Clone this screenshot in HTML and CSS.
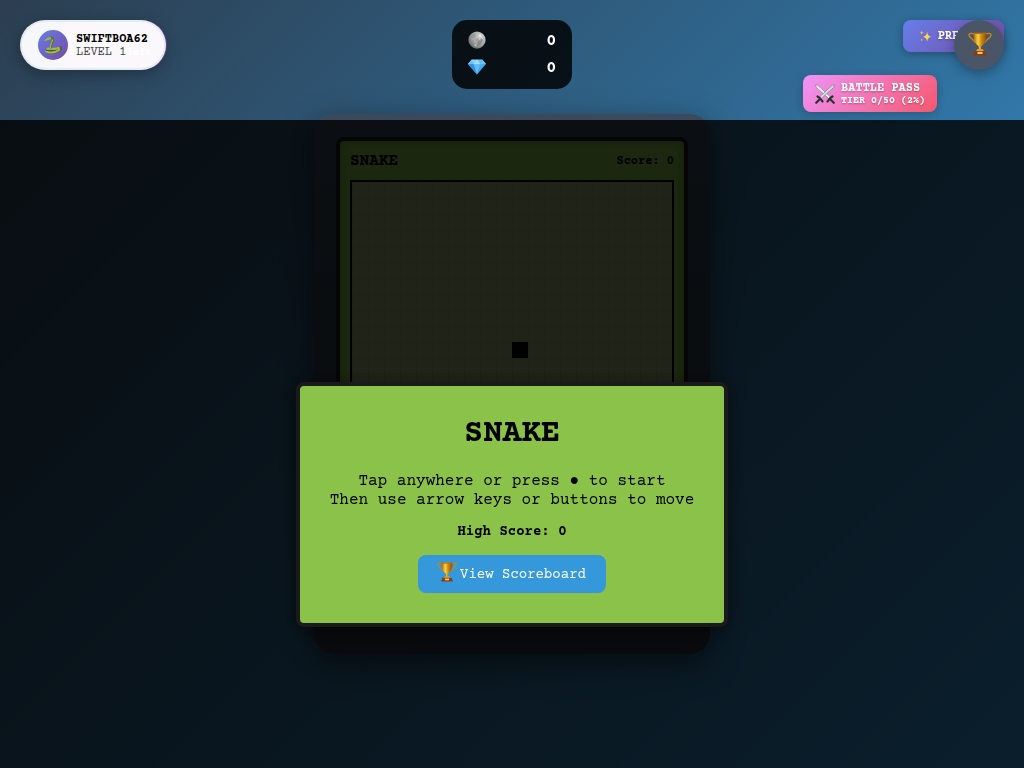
FILE: index.html
```html
<!DOCTYPE html>
<html lang="en">
<head>
<meta charset="utf-8">
<title>Snake</title>
<link rel="stylesheet" href="styles.css">
</head>
<body>
<svg class="sprite" aria-hidden="true">
  <defs>
    <linearGradient id="gold" x1="0" x2="1"><stop offset="0" stop-color="#a8640c"/><stop offset=".35" stop-color="#ffd23c"/><stop offset=".6" stop-color="#d08a10"/><stop offset="1" stop-color="#8a4d08"/></linearGradient>
    <linearGradient id="gem" x1="0" y1="0" x2="1" y2="1"><stop offset="0" stop-color="#bfeaff"/><stop offset=".5" stop-color="#4db4f5"/><stop offset="1" stop-color="#1b7fd0"/></linearGradient>
    <radialGradient id="moon" cx=".7" cy=".3" r=".8"><stop offset="0" stop-color="#d8d8d8"/><stop offset=".6" stop-color="#a2a2a2"/><stop offset="1" stop-color="#666"/></radialGradient>
    <symbol id="trophy" viewBox="0 0 24 24">
      <path d="M6.500 2.500C5 1 1 .8 1 3c0 3 4.500 4 6 7.500M17.500 2.500C19 1 23 .8 23 3c0 3-4.500 4-6 7.500" fill="none" stroke="#c9861a" stroke-width="1.400"/>
      <path d="M5.500 1h13c.3 6-1.500 11-4.500 12.500-.8.800-1 2-.8 4.500h-2.400c.2-2.500 0-3.700-.8-4.500C7 12 5.200 7 5.500 1z" fill="url(#gold)"/>
      <path d="M5.500 .700h13v1.300h-13z" fill="#b66f0c"/>
      <path d="M9.500 17h5l1.800 2.500H7.700z" fill="#e0a02a"/>
      <path d="M6.500 19h11l1.500 4.500H5z" fill="#873f12"/>
      <path d="M9.500 19.800h5v2.200h-5z" fill="#f1c06a"/>
    </symbol>
    <symbol id="swords" viewBox="0 0 24 24">
      <path d="M.5 1l3 .6L19 16l-2 2L1.500 4z" fill="#eef2f4" stroke="#76828a" stroke-width=".8"/>
      <path d="M23.500 1l-3 .6L5 16l2 2L22.500 4z" fill="#d4dce0" stroke="#76828a" stroke-width=".8"/>
      <path d="M3 15l2.500 1.500L7.500 19l1.500 2M21 15l-2.500 1.500L16.500 19 15 21M6 18l-4.500 4.500M18 18l4.500 4.500" stroke="#2c3034" stroke-width="2.600" stroke-linecap="round" fill="none"/>
    </symbol>
    <symbol id="sparkles" viewBox="0 0 24 24">
      <path d="M15 3c1 6 2.500 8 8 9.500-5.500 1.500-7 3.500-8 9.500-1-6-2.500-8-8-9.500C12.500 11 14 9 15 3z" fill="#ffd34e"/>
      <path d="M5 1c.5 2.500 1.300 3.500 4 4-2.700.5-3.500 1.500-4 4-.5-2.500-1.300-3.500-4-4 2.700-.5 3.500-1.500 4-4zM5 15c.4 2 1 2.800 3 3.200-2 .4-2.600 1.200-3 3.200-.4-2-1-2.800-3-3.200 2-.4 2.600-1.200 3-3.200z" fill="#f5b93a"/>
    </symbol>
    <symbol id="diamond" viewBox="0 0 24 24">
      <path d="M5 2h14l5 6-12 14L0 8z" fill="url(#gem)"/>
      <path d="M5 2L7.500 8H0zM19 2L16.500 8H24z" fill="#66c4f8"/>
      <path d="M7.500 8L12 2 16.500 8z" fill="#a5dcff"/>
      <path d="M7.500 8h9L12 22z" fill="#63bbf8"/>
      <path d="M0 8h7.500L12 22z" fill="#2c93e0"/>
    </symbol>
    <symbol id="coin" viewBox="0 0 24 24">
      <circle cx="12" cy="12" r="11.500" fill="url(#moon)"/>
      <path d="M5 5l4-2 2 3-3 4-4-1zM11 9l4 1-1 4-4-1zM3 12l4 1v4l-3-1z" fill="#8a8a8a" opacity=".45"/>
      <path d="M13 14l5-4 2 2-3 6-5 2z" fill="#686868" opacity=".5"/>
      <circle cx="10" cy="19" r="1.200" fill="#ccc"/><circle cx="16" cy="6" r="1.500" fill="#ededed"/>
    </symbol>
    <symbol id="snake" viewBox="0 0 24 24">
      <path d="M7 21c5 1.500 10 .5 13.500-2.500 1.500-1.500 1.500-3 1-4" fill="none" stroke="#4c661a" stroke-width="2" stroke-linecap="round"/>
      <path d="M4 19.500c4 2.500 12 2 15.500-2" fill="none" stroke="#a3ba48" stroke-width="2.600" stroke-linecap="round"/>
      <path d="M4 18.300c5 1.500 9 1 14-1.500" fill="none" stroke="#3f5614" stroke-width="1.200" stroke-linecap="round"/>
      <path d="M5.500 16.500c4-1 8 1.500 13-1" fill="none" stroke="#a3ba48" stroke-width="2.600" stroke-linecap="round"/>
      <path d="M8 3.500c3-1.500 5 .5 4.300 3.300C11.500 10 8.800 11 9.500 15" fill="none" stroke="#5c7820" stroke-width="2.600" stroke-linecap="round"/>
      <path d="M1.500 6.800C3.500 5 5.500 2.300 9 2.200l1 2.600C7 5.300 5 7.300 1.500 6.800z" fill="#9db53a"/>
      <path d="M11.500 6c-.8 3.500-3 5-2.600 9" fill="none" stroke="#bccd58" stroke-width="1" stroke-linecap="round"/>
    </symbol>
  </defs>
</svg>

<main class="page">
  <section class="device">
    <div class="screen">
      <header class="screen-head"><span class="game-name">SNAKE</span><span>Score: 0</span></header>
      <svg class="board" viewBox="0 0 320 320" role="img" aria-label="Game board">
        <defs><pattern id="grid" width="16" height="16" patternUnits="userSpaceOnUse"><path d="M0 .5H16M.5 0V16" stroke="#93a66d" stroke-width="1" fill="none"/></pattern></defs>
        <rect width="320" height="320" fill="url(#grid)"/>
        <rect x="160" y="160" width="16" height="16" fill="#000"/>
      </svg>
    </div>
  </section>
</main>

<div class="overlay">
  <section class="dialog" aria-labelledby="title">
    <h1 id="title">SNAKE</h1>
    <p class="hint">Tap anywhere or press ● to start<br>Then use arrow keys or buttons to move</p>
    <p class="high">High Score: 0</p>
    <button class="scoreboard" type="button"><svg class="icon-md"><use href="#trophy"/></svg><span>View Scoreboard</span></button>
  </section>
</div>

<div class="offer"><span>S</span><span class="offer-time"><span>8</span><span>left</span></span></div>
<button class="profile" type="button">
  <span class="avatar"><svg class="icon-md"><use href="#snake"/></svg></span>
  <span class="profile-text"><b>SWIFTBOA62</b><span class="level">LEVEL 1</span></span>
</button>

<div class="wallet">
  <div class="wallet-row"><svg class="icon-coin"><use href="#coin"/></svg><b>0</b></div>
  <div class="wallet-row"><svg class="icon-coin"><use href="#diamond"/></svg><b>0</b></div>
</div>

<button class="premium" type="button"><svg class="icon-sm"><use href="#sparkles"/></svg>PREMIUM</button>
<button class="trophy" type="button" aria-label="Scoreboard"><svg class="icon-lg"><use href="#trophy"/></svg></button>
<button class="pass" type="button">
  <svg class="icon-md"><use href="#swords"/></svg>
  <span class="pass-text"><span>BATTLE PASS</span><span class="tier">TIER 0/50 (2%)</span></span>
</button>
</body>
</html>
```
FILE: styles.css
```css
* { box-sizing: border-box; }
body {
  margin: 0;
  min-height: 100vh;
  background: linear-gradient(135deg, #2c3e50, #3498db) fixed;
  font-family: "Courier Prime", "Courier New", "Liberation Mono", monospace;
  color: #000;
  overflow: hidden;
}
button { font-family: inherit; border: 0; padding: 0; cursor: pointer; }
.sprite { position: absolute; width: 0; height: 0; }
.icon-sm { width: 13px; height: 13px; flex: none; }
.icon-coin { width: 18px; height: 18px; flex: none; }
.icon-md { width: 20px; height: 20px; flex: none; }
.icon-lg { width: 24px; height: 24px; flex: none; }

.page { min-height: 100vh; display: flex; justify-content: center; align-items: center; }
.device {
  min-height: 540px;
  padding: 23px 22px;
  border-radius: 20px;
  background: linear-gradient(#3a4a5c, #2c3440);
  box-shadow: 0 10px 30px rgba(0, 0, 0, .5);
}
.screen {
  padding: 10px;
  border: 4px solid #1a1a1a;
  border-radius: 8px;
  background: #8bc34a;
  box-shadow: inset 0 0 10px rgba(0, 0, 0, .3);
}
.screen-head {
  display: flex;
  justify-content: space-between;
  align-items: center;
  height: 19px;
  margin-bottom: 10px;
  padding-top: 1px;
  font-size: 12px;
  font-weight: bold;
}
.game-name { font-size: 16px; }
.board { display: block; width: 324px; height: 324px; border: 2px solid #000; background: #9fb379; }

.overlay {
  position: fixed;
  inset: 120px 0 0;
  padding-top: 120px;
  display: flex;
  justify-content: center;
  align-items: center;
  background: rgba(0, 0, 0, .8);
}
.dialog {
  padding: 30px;
  border: 4px solid #1a1a1a;
  border-radius: 8px;
  background: #8bc34a;
  text-align: center;
  box-shadow: 0 4px 20px rgba(0, 0, 0, .5);
}
.dialog h1 { margin: 0 0 20px; font-size: 32px; line-height: 36px; }
.hint { margin: 0 0 14px; font-size: 16px; line-height: 19px; }
.high { margin: 0 0 15px; font-size: 14px; line-height: 16px; font-weight: bold; }
.scoreboard {
  display: inline-flex;
  align-items: center;
  gap: 3px;
  height: 38px;
  padding: 0 20px 0 19px;
  border-radius: 8px;
  background: #3498db;
  color: #fff;
  font-size: 14px;
}
.scoreboard span { padding-top: 3px; }
.scoreboard svg { margin-bottom: 4px; }

.offer {
  position: fixed;
  top: 20px;
  left: 53px;
  display: flex;
  flex-direction: column;
  width: 114px;
  height: 50px;
  padding: 13px 16px 0 15px;
  border-radius: 25px;
  background: #764ba2;
  color: #fff;
  font-size: 12px;
  font-weight: bold;
  line-height: 13px;
}
.offer-time { display: flex; justify-content: space-between; font-size: 10px; }
.profile {
  position: fixed;
  top: 20px;
  left: 20px;
  display: flex;
  align-items: center;
  gap: 8px;
  height: 50px;
  padding: 0 16px;
  border: 2px solid rgba(226, 234, 244, .9);
  border-radius: 25px;
  background: rgba(255, 255, 255, .96);
  box-shadow: 0 4px 15px rgba(0, 0, 0, .3);
  color: #000;
  font-size: 12px;
}
.avatar {
  display: flex;
  align-items: center;
  justify-content: center;
  width: 30px;
  height: 30px;
  border-radius: 50%;
  background: linear-gradient(135deg, #667eea, #764ba2);
}
.profile-text, .pass-text {
  display: flex;
  flex-direction: column;
  padding-top: 2px;
  line-height: 13px;
  text-align: left;
}
.level { color: #444; }

.wallet {
  position: fixed;
  top: 20px;
  left: 50%;
  transform: translateX(-50%);
  display: flex;
  flex-direction: column;
  gap: 7px;
  width: 120px;
  padding: 10px 16px 12px;
  border-radius: 15px;
  background: rgba(0, 0, 0, .82);
  color: #fff;
  font-size: 16px;
}
.wallet-row { display: flex; align-items: center; justify-content: space-between; height: 20px; }
.wallet-row b { padding-top: 1px; }

.premium {
  position: fixed;
  top: 20px;
  right: 20px;
  display: flex;
  align-items: center;
  gap: 6px;
  height: 32px;
  padding: 0 16px;
  border-radius: 8px;
  background: linear-gradient(135deg, #667eea, #764ba2);
  box-shadow: 0 2px 8px rgba(0, 0, 0, .3);
  color: #fff;
  font-size: 12px;
  font-weight: bold;
  text-shadow: 0 1px 2px rgba(0, 0, 0, .3);
}
.trophy {
  position: fixed;
  top: 20px;
  right: 20px;
  display: flex;
  align-items: center;
  justify-content: center;
  width: 50px;
  height: 50px;
  padding: 0 0 2px 2px;
  border-radius: 50%;
  background: #4a5568;
  box-shadow: 0 4px 12px rgba(0, 0, 0, .3);
}
.pass {
  position: fixed;
  top: 75px;
  right: 87px;
  display: flex;
  align-items: center;
  gap: 6px;
  height: 37px;
  padding: 0 12px;
  border-radius: 8px;
  background: linear-gradient(135deg, #f093fb, #f5576c);
  box-shadow: 0 2px 8px rgba(0, 0, 0, .2);
  color: #fff;
  font-size: 12px;
  font-weight: bold;
  text-shadow: 0 1px 2px rgba(0, 0, 0, .3);
}
.pass-text { line-height: 12px; }
.tier { font-size: 10px; }
```
